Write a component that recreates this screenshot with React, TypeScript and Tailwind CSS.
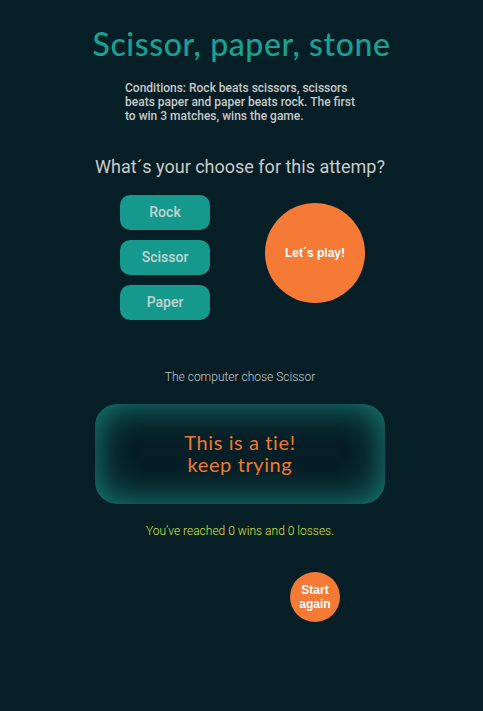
import React from 'react'

export default function App() {
    return (
        <div className="min-h-[711px] w-full bg-[#061e26] font-['Roboto',sans-serif]">
            <div className="ml-[95px] flex w-[290px] flex-col items-center pt-[25px]">
                {/* Title */}
                <h1 className="ml-[3px] whitespace-nowrap font-['Lato',sans-serif] text-[32px] font-medium leading-[38px] tracking-[0.6px] text-[#17a293]">
                    Scissor, paper, stone
                </h1>

                <p className="mt-[18px] w-[232px] self-start ml-[30px] text-[12px] font-medium leading-[14px] text-[#c9c9c9]">
                    Conditions: Rock beats scissors, scissors beats paper and paper beats rock. The first to win 3 matches, wins the game.
                </p>

                <h2 className="mt-[33px] whitespace-nowrap text-[18px] leading-[22px] text-[#cbcbcb]">
                    What´s your choose for this attemp?
                </h2>

                {/* Choices */}
                <div className="mt-[17px] flex w-full items-start pl-[25px]">
                    <div className="flex flex-col gap-[10px]">
                        <button className="h-[35px] w-[90px] rounded-[10px] bg-[#15998d] text-[14px] font-medium text-[#c5d3d1]">Rock</button>
                        <button className="h-[35px] w-[90px] rounded-[10px] bg-[#15998d] text-[14px] font-medium text-[#c5d3d1]">Scissor</button>
                        <button className="h-[35px] w-[90px] rounded-[10px] bg-[#15998d] text-[14px] font-medium text-[#c5d3d1]">Paper</button>
                    </div>
                    <button className="ml-[55px] mt-[8px] flex h-[100px] w-[100px] items-center justify-center rounded-full bg-[#f47a36] font-['Liberation_Sans',sans-serif] text-[12px] font-bold text-white">
                        Let´s play!
                    </button>
                </div>

                <p className="mt-[50px] text-[12px] font-light leading-[14px] text-[#c9c9c9]">
                    The computer chose Scissor
                </p>

                {/* Result */}
                <div className="mt-[20px] flex h-[100px] w-[290px] flex-col items-center justify-center rounded-[22px] bg-[#061e26] shadow-[inset_0_0_36px_#1a8a7e]">
                    <p className="-mt-[2px] text-center font-['Lato',sans-serif] text-[20px] font-normal leading-[22px] tracking-[0.6px] text-[#f2782f]">
                        This is a tie!
                        <br />
                        keep trying
                    </p>
                </div>

                <p className="mt-[20px] text-[12px] font-light leading-[14px] text-[#dbe23a]">
                    You’ve reached 0 wins and 0 losses.
                </p>

                <div className="mt-[34px] flex w-full justify-end pr-[45px]">
                    <button className="flex h-[50px] w-[50px] items-center justify-center rounded-full bg-[#f47a36] font-['Liberation_Sans',sans-serif] text-[12px] font-bold leading-[14px] text-white">
                        Start
                        <br />
                        again
                    </button>
                </div>
            </div>
        </div>
    )
}
